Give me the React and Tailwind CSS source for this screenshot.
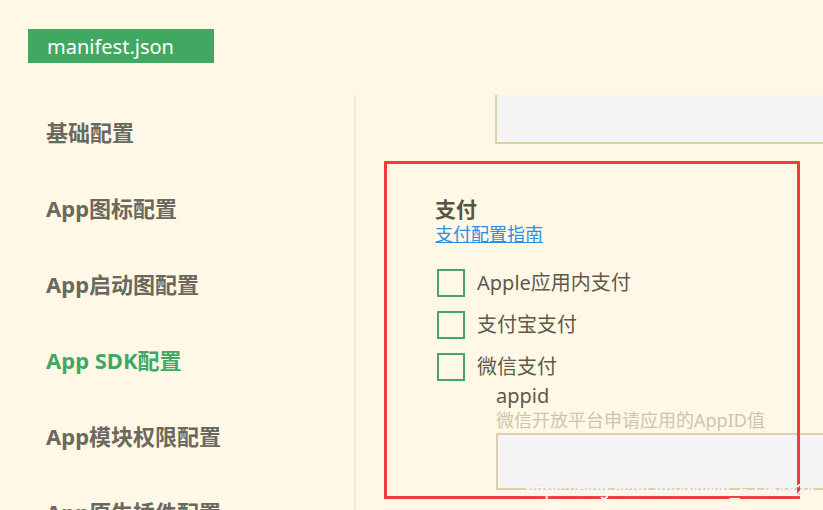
import React from 'react';

const FONT = { fontFamily: '"Noto Sans", "Noto Sans CJK SC", sans-serif' };

const NAV = [
  { label: '基础配置' },
  { label: 'App图标配置' },
  { label: 'App启动图配置' },
  { label: 'App SDK配置', active: true },
  { label: 'App模块权限配置' },
  { label: 'App原生插件配置' },
];

const PAYMENTS = ['Apple应用内支付', '支付宝支付', '微信支付'];

function Checkbox({ label }) {
  return (
    <label className="flex items-center gap-3 h-[42px] cursor-pointer">
      <span className="w-[28px] h-[28px] border-2 border-[#47a566] shrink-0" />
      <span className="text-[20px] text-[#5e594b] leading-none">{label}</span>
    </label>
  );
}

export default function App() {
  return (
    <div
      className="w-[823px] h-[510px] bg-[#fff8e6] overflow-hidden flex flex-col relative"
      style={FONT}
    >
      {/* header */}
      <div className="h-[95px] shrink-0 pt-[29px] pl-[28px]">
        <div className="w-[186px] h-[34px] bg-[#41a862] text-white text-[20px] leading-[35px] pl-[19px]">
          manifest.json
        </div>
      </div>

      <div className="flex flex-1 min-h-0">
        {/* sidebar */}
        <nav className="w-[356px] shrink-0 border-r-2 border-[#f1ead5] pl-[46px] pt-[22px]">
          {NAV.map((n) => (
            <div
              key={n.label}
              className={`h-[76px] text-[22px] font-bold leading-[30px] ${
                n.active ? 'text-[#3fa864]' : 'text-[#6b685d]'
              }`}
            >
              {n.label}
            </div>
          ))}
        </nav>

        {/* content */}
        <div className="flex-1 min-w-0 overflow-hidden">
          <div className="ml-[139px] -mt-[10px] w-[400px] h-[59px] bg-[#f5f5f5] border-2 border-[#ddd0aa]" />

          <div className="relative ml-[28px] mt-[17px] w-[416px] h-[338px] pl-[51px] pt-[35px]">
            <div className="text-[21px] font-bold text-[#5a5242] leading-[26px]">支付</div>
            <a
              href="#"
              className="text-[18px] text-[#2c8fe3] underline leading-[24px] block"
              onClick={(e) => e.preventDefault()}
            >
              支付配置指南
            </a>

            <div className="mt-[16px] ml-[2px]">
              {PAYMENTS.map((p) => (
                <Checkbox key={p} label={p} />
              ))}
            </div>

            <div className="pl-[61px] -mt-[5px]">
              <div className="text-[20px] text-[#5e594b] leading-[26px]">appid</div>
              <div className="text-[18px] text-[#cdc5ae] leading-[22px]">微信开放平台申请应用的AppID值</div>
              <div className="mt-[2px] w-[400px] h-[57px] bg-[#f5f5f5] border-2 border-[#ddd0aa]" />
            </div>

            {/* annotation frame drawn over the form */}
            <div className="absolute inset-0 border-[3px] border-[#f23b3b] pointer-events-none" />
          </div>
        </div>
      </div>

      <div
        className="absolute right-[8px] bottom-[11px] text-[17px] leading-none text-white/90 pointer-events-none"
        style={{ fontFamily: '"Liberation Sans", sans-serif', textShadow: '0 0 1px #d8d8d8' }}
      >
        https://blog.csdn.net/weixin_52264824
      </div>
    </div>
  );
}
